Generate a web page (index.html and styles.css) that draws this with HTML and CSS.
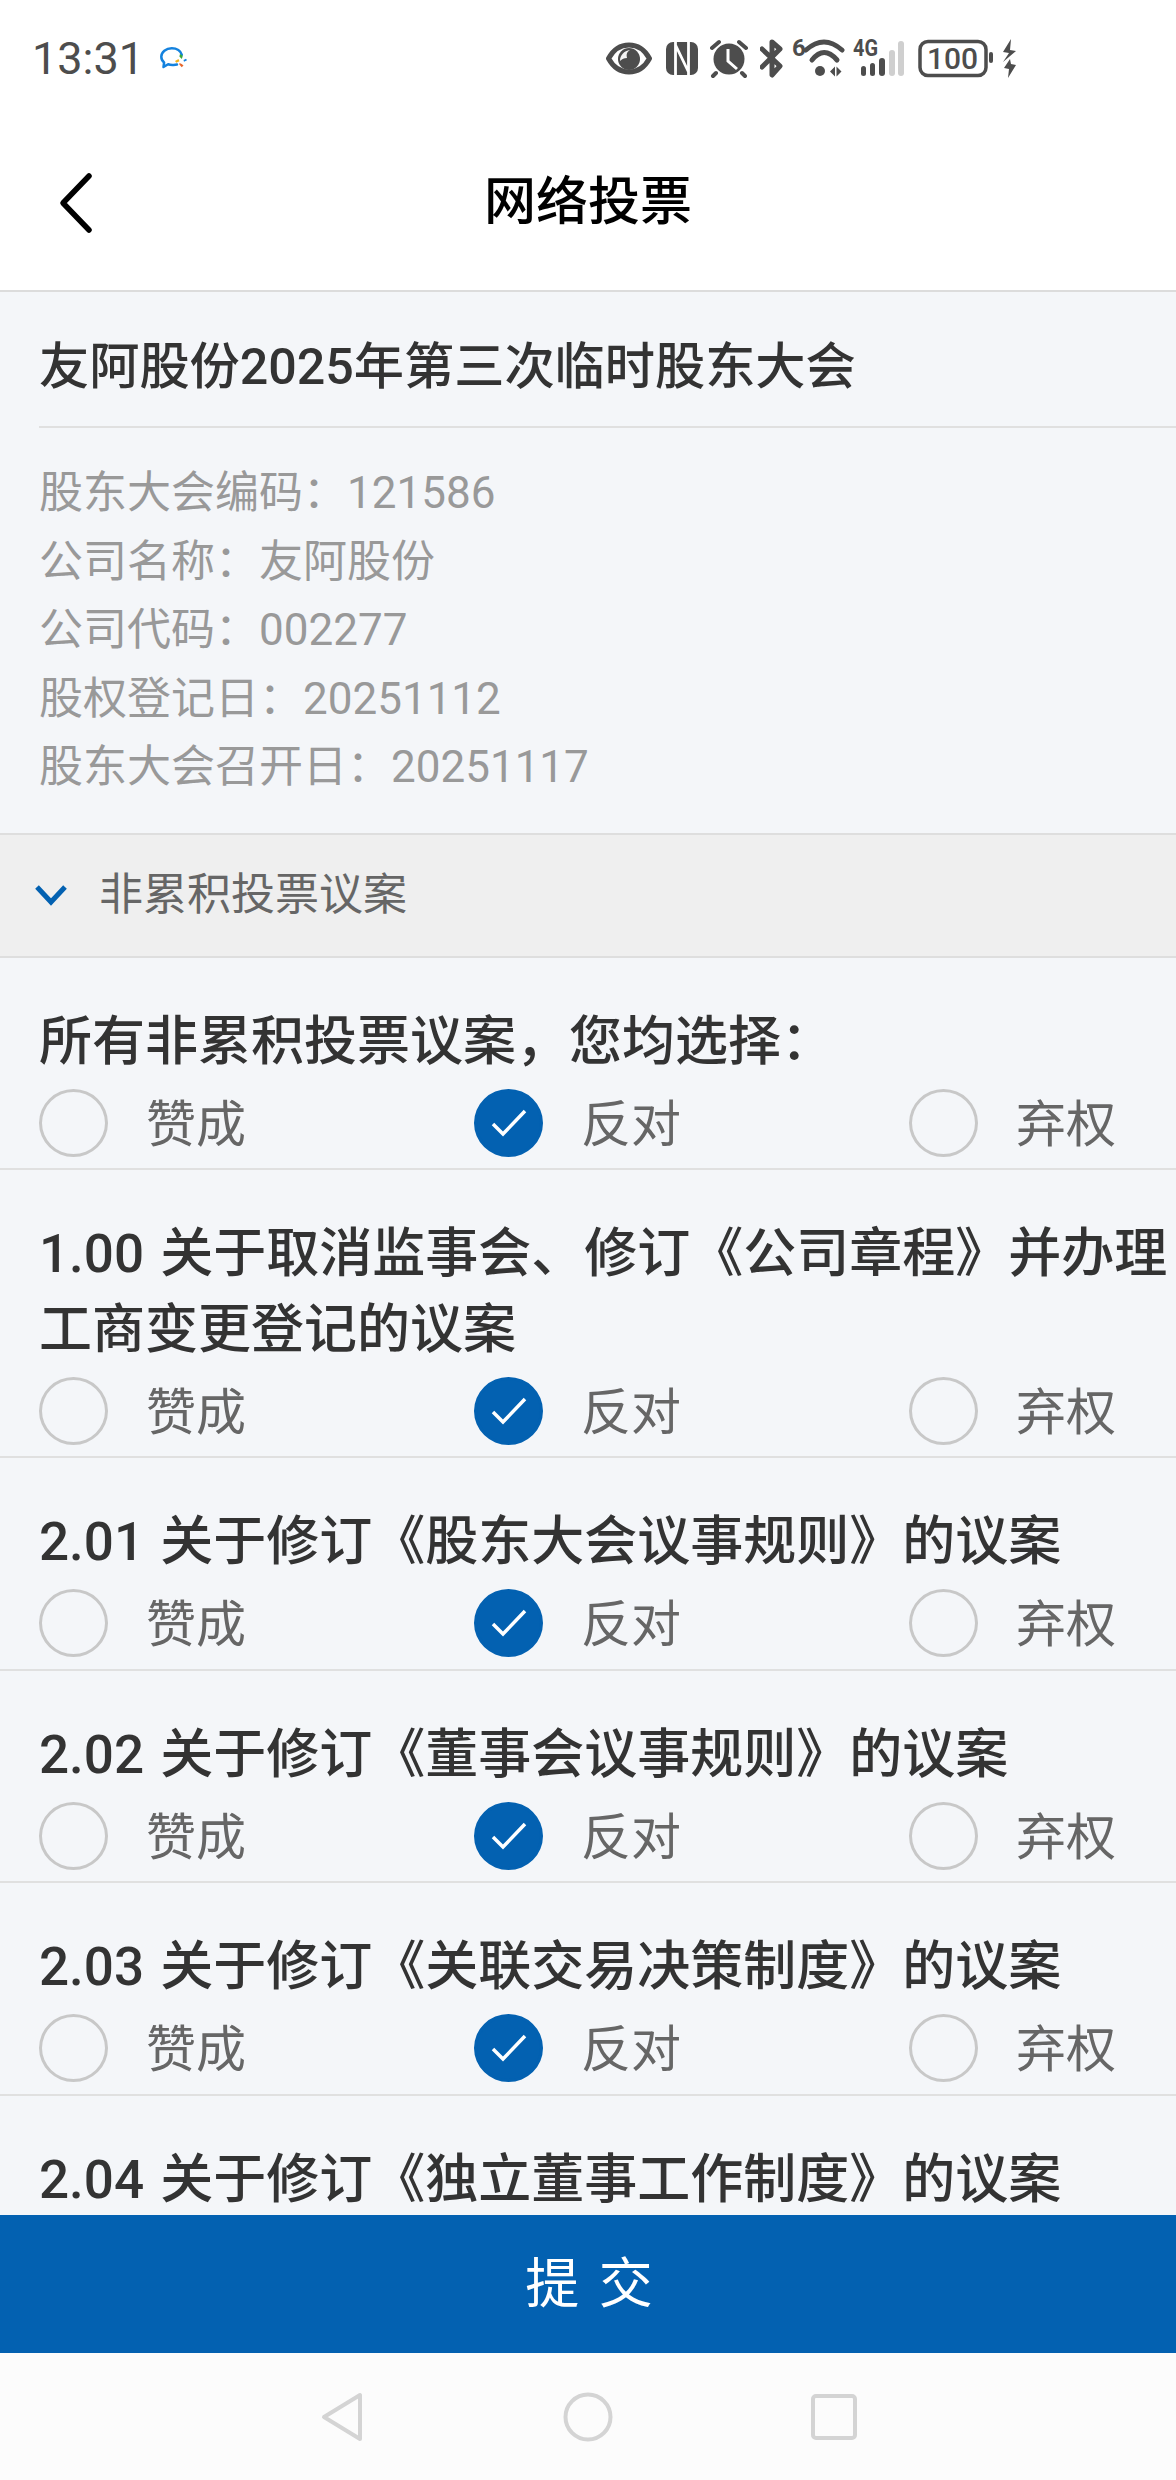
FILE: index.html
```html
<!DOCTYPE html>
<html lang="zh-CN">
<head>
<meta charset="utf-8">
<title>网络投票</title>
<link rel="stylesheet" href="styles.css">
</head>
<body>
<div class="app">
  <header class="status">
    <span class="time">13:31</span>
    <svg class="wecom" width="28" height="24" viewBox="0 0 28 24"><path d="M17 17.500c-1.500.4-3 .5-4.500.4-1.600 0-3-.2-4.400-.7L3.500 20l.6-4.500C2.200 14 1.300 12 1.300 9.800 1.300 5 6 1.300 11.800 1.300c5 0 9 2.700 10 6.500" fill="none" stroke="#1482de" stroke-width="2.500" stroke-linecap="round" stroke-linejoin="round"/><path d="M15 14l3.500-2 1 2.200-3.200 1.500z" fill="#f5b21a"/><path d="M20 7l2.800 1.800-1 3.200-2.400-2.600z" fill="#3aa83a"/><path d="M23.500 13l2.500-1.200 1 1.400-3 1.600z" fill="#1482de"/><path d="M19.500 16l2.200 1 1.800 1.400-1.800 1.800-2.400-2.600z" fill="#e8662a"/></svg>
    <div class="indicators">
      <svg width="60" height="40" viewBox="0 0 60 40"><path d="M2.500 19.500C8 9.500 15 6 23 6s15 3.500 20.500 13.500C38 29.500 31 33 23 33S8 29.500 2.500 19.500z" fill="none" stroke="#4d4d4d" stroke-width="5" stroke-linejoin="round"/><circle cx="23" cy="20" r="11" fill="#4d4d4d"/><path d="M14 22c0-6 4-10 10-11-3 2-4 4-3 8-3 0-5 1-7 3z" fill="#f4f4f4"/></svg>
      <svg width="44" height="40" viewBox="0 0 44 40"><rect x="0" y="3" width="32" height="33" rx="7" fill="#4d4d4d"/><path d="M9.500 3v33M9.500 6l13 27M22.500 3v33" fill="none" stroke="#fff" stroke-width="2.800"/></svg>
      <svg width="50" height="40" viewBox="0 0 50 40"><circle cx="19" cy="20" r="15.500" fill="#4d4d4d"/><path d="M18 10v12l9 8" fill="none" stroke="#fff" stroke-width="3"/><path d="M2 9l7-6M36 9l-7-6M6 34l-3 3M32 34l3 3" fill="none" stroke="#4d4d4d" stroke-width="4" stroke-linecap="round"/></svg>
      <svg width="32" height="40" viewBox="0 0 32 40"><path d="M2 10l18 17-8 9V3l8 7L2 28" fill="none" stroke="#4d4d4d" stroke-width="5" stroke-linejoin="round" stroke-linecap="round"/></svg>
      <svg class="tall" width="61" height="46" viewBox="0 -6 61 46"><text class="mini" x="0" y="17">6</text><path d="M14 11Q32-5 50 11" fill="none" stroke="#4d4d4d" stroke-width="5" stroke-linecap="round"/><path d="M20 21Q32 6 45 21" fill="none" stroke="#4d4d4d" stroke-width="5" stroke-linecap="round"/><circle cx="28" cy="32" r="5" fill="#4d4d4d"/><path d="M38 32.500l5-5v10zM44.500 27.500l5 5-5 5z" fill="#4d4d4d"/></svg>
      <svg class="tall" width="65" height="46" viewBox="0 -6 65 46"><text class="mini" x="0" y="17" textLength="25" lengthAdjust="spacingAndGlyphs">4G</text><g fill="#4d4d4d"><rect x="8" y="27" width="5" height="10" rx="2.500"/><rect x="17" y="24" width="5" height="13" rx="2.500"/><rect x="26" y="19" width="6" height="18" rx="3"/></g><g fill="#cfcfcf"><rect x="36" y="11" width="6" height="26" rx="3"/><rect x="45" y="2" width="6" height="35" rx="3"/></g></svg>
      <svg width="84" height="40" viewBox="0 0 84 40"><rect x="2" y="2.500" width="66" height="34" rx="8" fill="none" stroke="#4d4d4d" stroke-width="3.500"/><text class="level" x="34.500" y="29.500">100</text><rect x="71" y="13" width="4" height="11" rx="2" fill="#4d4d4d"/></svg>
      <svg width="15" height="40" viewBox="0 0 15 40"><path d="M9 0L1 13l6 1-6 9 13-11-6-1zM8 20l-6 9 5 1-1 9 8-13-5-1z" fill="#4d4d4d"/></svg>
    </div>
  </header>

  <nav class="nav">
    <svg class="back" width="34" height="62" viewBox="0 0 34 62"><path d="M30 4L4 31l26 27" fill="none" stroke="#000" stroke-width="5.500" stroke-linecap="round" stroke-linejoin="round"/></svg>
    <h1 class="nav-title">网络投票</h1>
  </nav>

  <main class="content">
    <section class="meeting">
      <h2 class="meeting-title">友阿股份2025年第三次临时股东大会</h2>
      <div class="meeting-info">
        <p>股东大会编码：121586</p>
        <p>公司名称：友阿股份</p>
        <p>公司代码：002277</p>
        <p>股权登记日：20251112</p>
        <p>股东大会召开日：20251117</p>
      </div>
    </section>

    <div class="group">
      <svg width="34" height="24" viewBox="0 0 34 24"><path d="M3 4l14 15L31 4" fill="none" stroke="#0361b1" stroke-width="5"/></svg>
      <span>非累积投票议案</span>
    </div>

    <article class="item">
      <h3 class="item-title">所有非累积投票议案，您均选择：</h3>
      <div class="choices">
        <div class="choice"><i class="radio"></i><span>赞成</span></div>
        <div class="choice"><i class="radio on"><svg width="38" height="30" viewBox="0 0 38 30"><path d="M3 16l10 10L35 3" fill="none" stroke="#fff" stroke-width="3.500"/></svg></i><span>反对</span></div>
        <div class="choice"><i class="radio"></i><span>弃权</span></div>
      </div>
    </article>

    <article class="item">
      <h3 class="item-title">1.00 关于取消监事会、修订《公司章程》并办理工商变更登记的议案</h3>
      <div class="choices">
        <div class="choice"><i class="radio"></i><span>赞成</span></div>
        <div class="choice"><i class="radio on"><svg width="38" height="30" viewBox="0 0 38 30"><path d="M3 16l10 10L35 3" fill="none" stroke="#fff" stroke-width="3.500"/></svg></i><span>反对</span></div>
        <div class="choice"><i class="radio"></i><span>弃权</span></div>
      </div>
    </article>

    <article class="item">
      <h3 class="item-title">2.01 关于修订《股东大会议事规则》的议案</h3>
      <div class="choices">
        <div class="choice"><i class="radio"></i><span>赞成</span></div>
        <div class="choice"><i class="radio on"><svg width="38" height="30" viewBox="0 0 38 30"><path d="M3 16l10 10L35 3" fill="none" stroke="#fff" stroke-width="3.500"/></svg></i><span>反对</span></div>
        <div class="choice"><i class="radio"></i><span>弃权</span></div>
      </div>
    </article>

    <article class="item">
      <h3 class="item-title">2.02 关于修订《董事会议事规则》的议案</h3>
      <div class="choices">
        <div class="choice"><i class="radio"></i><span>赞成</span></div>
        <div class="choice"><i class="radio on"><svg width="38" height="30" viewBox="0 0 38 30"><path d="M3 16l10 10L35 3" fill="none" stroke="#fff" stroke-width="3.500"/></svg></i><span>反对</span></div>
        <div class="choice"><i class="radio"></i><span>弃权</span></div>
      </div>
    </article>

    <article class="item">
      <h3 class="item-title">2.03 关于修订《关联交易决策制度》的议案</h3>
      <div class="choices">
        <div class="choice"><i class="radio"></i><span>赞成</span></div>
        <div class="choice"><i class="radio on"><svg width="38" height="30" viewBox="0 0 38 30"><path d="M3 16l10 10L35 3" fill="none" stroke="#fff" stroke-width="3.500"/></svg></i><span>反对</span></div>
        <div class="choice"><i class="radio"></i><span>弃权</span></div>
      </div>
    </article>

    <article class="item">
      <h3 class="item-title">2.04 关于修订《独立董事工作制度》的议案</h3>
    </article>
  </main>

  <button class="submit" type="button"><span class="submit-label">提 交</span></button>

  <footer class="sysnav">
    <svg width="42" height="50" viewBox="0 0 42 50"><path d="M39 3v44L3 25z" fill="none" stroke="#d4d4d4" stroke-width="4" stroke-linejoin="round"/></svg>
    <svg width="50" height="50" viewBox="0 0 50 50"><circle cx="25" cy="25" r="22.500" fill="none" stroke="#d4d4d4" stroke-width="4"/></svg>
    <svg width="46" height="46" viewBox="0 0 46 46"><rect x="2" y="2" width="42" height="42" rx="3" fill="none" stroke="#d4d4d4" stroke-width="4"/></svg>
  </footer>
</div>
</body>
</html>
```
FILE: styles.css
```css
* { box-sizing: border-box; margin: 0; padding: 0; }
html, body { width: 1176px; height: 2480px; overflow: hidden; }
body { background: #fff; font-family: Roboto, "Noto Sans CJK SC", sans-serif; color: #333; }
.app { display: flex; flex-direction: column; height: 2480px; }

.status { height: 112px; display: flex; align-items: flex-start; padding: 37px 159px 0 32px; flex: none; }
.time { font-size: 45px; line-height: 44px; color: #4d4d4d; }
.wecom { margin: 10px 0 0 16px; }
.indicators { margin-left: auto; display: flex; margin-top: 2px; }
.indicators .tall { margin-top: -6px; }
.mini { font: 700 24px "Roboto", sans-serif; fill: #4d4d4d; }
.level { font: 500 30px "Roboto", sans-serif; fill: #4d4d4d; text-anchor: middle; }

.nav { height: 180px; flex: none; border-bottom: 2px solid #dcdcdc; display: flex; align-items: center; justify-content: center; position: relative; padding-top: 4px; }
.back { position: absolute; left: 59px; top: 60px; }
.nav-title { font-size: 52px; font-weight: 500; color: #000; line-height: 76px; }

.content { flex: 1; min-height: 0; overflow: hidden; background: #f4f6f9; }
.meeting-title { margin-left: 39px; padding: 37px 0 21px; font-size: 50.2px; font-weight: 500; line-height: 76px; border-bottom: 2px solid #e0e0e0; color: #333; }
.meeting-info { padding: 31px 0 31px 39px; font-size: 44px; line-height: 68.6px; color: #999; }

.group { height: 125px; display: flex; align-items: center; gap: 31px; padding-left: 34px; background: #efefef; border-top: 2px solid #dedede; border-bottom: 2px solid #dedede; font-size: 44px; color: #666; }
.group span { margin-bottom: 8px; }

.item { padding: 47px 0 3px; border-bottom: 2px solid #e0e0e0; }
.item-title { padding-left: 39px; font-size: 53px; font-weight: 500; line-height: 75.5px; word-spacing: 3px; color: #333; }
.choices { height: 85px; display: flex; justify-content: space-between; align-items: center; padding: 0 60px 0 39px; }
.choice { display: flex; align-items: center; gap: 38px; font-size: 50px; color: #666; }
.choice span { margin-bottom: 6px; }
.radio { width: 69px; height: 68px; border-radius: 50%; border: 3px solid #c8c8c8; display: flex; align-items: center; justify-content: center; }
.radio.on { background: #0361b1; border-color: #0361b1; }

.submit { height: 138px; flex: none; border: 0; background: #0361b1; color: #fff; font-family: inherit; font-size: 54px; word-spacing: 6px; padding: 0 0 10px 2px; }
.sysnav { height: 127px; flex: none; background: #fcfcfc; display: flex; align-items: center; justify-content: center; gap: 198px; padding-left: 2px; }
.sysnav svg:first-child { margin-right: 2px; }
```
